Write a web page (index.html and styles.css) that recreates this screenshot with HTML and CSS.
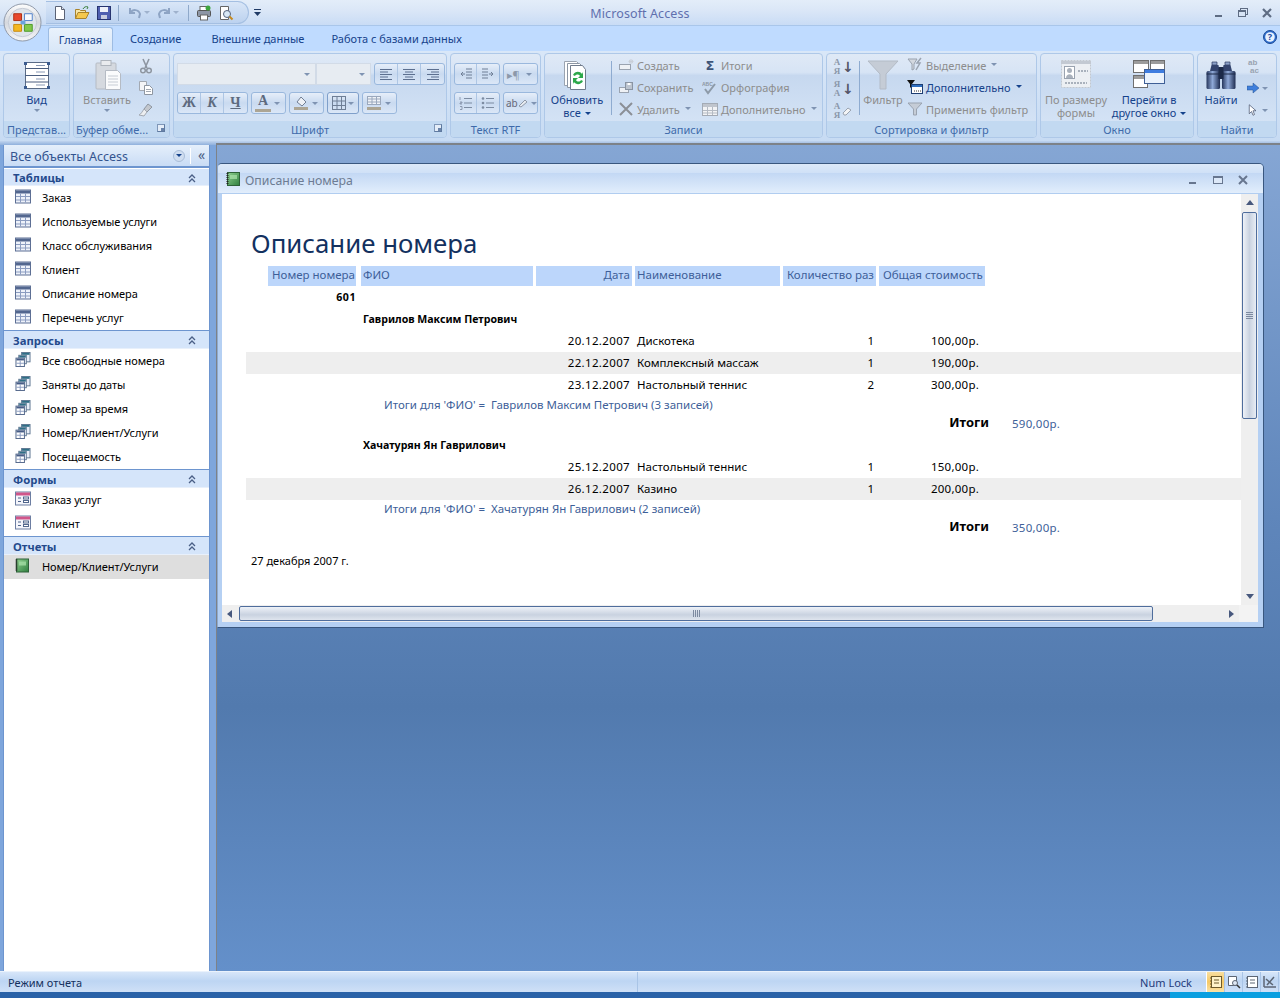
FILE: index.html
```html
<!DOCTYPE html>
<html lang="ru">
<head>
<meta charset="utf-8">
<title>Microsoft Access</title>
<link rel="stylesheet" href="styles.css">
</head>
<body>
<svg class="defs" width="0" height="0">
  <defs>
    <linearGradient id="glass" x1="0" y1="0" x2="0" y2="1"><stop offset="0" stop-color="#fdfdfd"/><stop offset=".5" stop-color="#d5d8de"/><stop offset="1" stop-color="#f4f5f7"/></linearGradient>
    <linearGradient id="bino" x1="0" y1="0" x2="1" y2="0"><stop offset="0" stop-color="#26365c"/><stop offset=".45" stop-color="#8fa9d8"/><stop offset="1" stop-color="#1e2c50"/></linearGradient>
    <linearGradient id="book" x1="0" y1="0" x2="1" y2="1"><stop offset="0" stop-color="#8fd08f"/><stop offset="1" stop-color="#2f7f3f"/></linearGradient>
    <symbol id="i-table" viewBox="0 0 16 14"><rect x=".5" y=".5" width="15" height="13" fill="#eef2fa" stroke="#5d6f94"/><rect x="1" y="1" width="14" height="3" fill="#53678f"/><path d="M1 7h14M1 10.500h14M5.500 4v9M10.500 4v9" stroke="#8b9cc0" fill="none"/></symbol>
    <symbol id="i-query" viewBox="0 0 16 16"><rect x="6.500" y=".5" width="9" height="10" fill="#e9eef8" stroke="#5d7590"/><rect x="7" y="1" width="8" height="2" fill="#2f6f86"/><rect x="3.500" y="3.500" width="8" height="9" fill="#f2f5fb" stroke="#5d7590"/><rect x="4" y="4" width="7" height="2" fill="#2f6f86"/><rect x=".5" y="6.500" width="9" height="9" fill="#fff" stroke="#4f6488"/><rect x="1" y="7" width="8" height="2" fill="#465c86"/><path d="M1 12h8M5 9v6" stroke="#8b9cc0"/></symbol>
    <symbol id="i-form" viewBox="0 0 16 14"><rect x=".5" y=".5" width="15" height="13" fill="#f4f5fb" stroke="#6d7ea2"/><rect x="1" y="1" width="14" height="3" fill="#d0568a"/><path d="M3 6.500h3M3 10h3" stroke="#51668c"/><rect x="8.500" y="5.500" width="5" height="2" fill="#fff" stroke="#51668c"/><rect x="8.500" y="9" width="5" height="2" fill="#fff" stroke="#51668c"/></symbol>
    <symbol id="i-report" viewBox="0 0 14 14"><rect x="1.500" y=".5" width="12" height="13" fill="url(#book)" stroke="#2d6138"/><rect x="4" y="3" width="7" height="4" fill="#a8e0a8" opacity=".75"/><path d="M.5 1.500h2M.5 3.500h2M.5 5.500h2M.5 7.500h2M.5 9.500h2M.5 11.500h2" stroke="#222"/></symbol>
    <symbol id="i-chev" viewBox="0 0 10 10"><path d="M2 5l3-3 3 3M2 9l3-3 3 3" fill="none" stroke="#4a5f86" stroke-width="1.300"/></symbol>
  </defs>
</svg>

<svg class="orb" viewBox="0 0 40 40" aria-hidden="true">
  <circle cx="20" cy="20" r="19" fill="url(#glass)" stroke="#8f98a8"/>
  <circle cx="20" cy="20" r="14.500" fill="#dfe4ea" stroke="#c3c9d3"/>
  <path d="M11 11h8v7h-8z" fill="#e8482c" stroke="#b03012"/>
  <path d="M22 11h8v7h-8z" fill="#f7f9fc" stroke="#4f80c8"/>
  <path d="M11 22h8v7h-8z" fill="#f5b820" stroke="#c78b10"/>
  <path d="M22 22h8v7h-8z" fill="#82c84a" stroke="#4c9a2a"/>
  <path d="M18 18h5v4h-5z" fill="#6aa3de"/>
</svg>

<header class="titlebar">
  <div class="qat-zone">
    <div class="qat">
      <svg class="qi" viewBox="0 0 16 16"><path d="M3.500 1.500h6l3 3v10h-9z" fill="#fff" stroke="#5a6275"/><path d="M9.500 1.500v3h3" fill="#dfe6f2" stroke="#5a6275"/></svg>
      <svg class="qi" viewBox="0 0 16 16"><path d="M1.500 13.500v-9h4l1 1h5v2" fill="#f7e6a6" stroke="#a9832c"/><path d="M1.500 13.500l2.500-6h11l-3 6z" fill="#f5c84e" stroke="#a9832c"/><path d="M9 4c1-2 3-3 5-2l-1 2" fill="none" stroke="#3a7f3a"/></svg>
      <svg class="qi" viewBox="0 0 16 16"><rect x="1.500" y="1.500" width="13" height="13" fill="#4f5fb0" stroke="#27346f"/><rect x="4" y="2" width="8" height="5" fill="#eef1fa"/><rect x="5" y="10" width="6" height="4" fill="#c8cde0"/></svg>
      <i class="qsep"></i>
      <svg class="qi dim" viewBox="0 0 16 16"><path d="M3 3v5h5M3.500 8c2-4 8-4 9.500 1l-1 4" fill="none" stroke="#8ea4c4" stroke-width="2"/></svg>
      <b class="qarrow"></b>
      <svg class="qi dim gap" viewBox="0 0 16 16"><path d="M13 3v5H8M12.500 8c-2-4-8-4-9.500 1l1 4" fill="none" stroke="#8ea4c4" stroke-width="2"/></svg>
      <b class="qarrow"></b>
      <i class="qsep s2"></i>
      <svg class="qi" viewBox="0 0 16 16"><rect x="4" y="1.500" width="8" height="5" fill="#fff" stroke="#666"/><rect x="1.500" y="5.500" width="13" height="6" rx="1" fill="#8d96a6" stroke="#555"/><rect x="4.500" y="10" width="7" height="5" fill="#fff" stroke="#666"/><circle cx="12" cy="3" r="2.500" fill="#3ea53e"/></svg>
      <svg class="qi" viewBox="0 0 16 16"><path d="M2.500 1.500h8v13h-8z" fill="#fff" stroke="#666"/><circle cx="9" cy="9" r="3.500" fill="#d8e8f6" stroke="#55647e"/><path d="M11.500 11.500l3 3" stroke="#c48a20" stroke-width="2"/></svg>
    </div>
    <svg class="qmore" viewBox="0 0 7 7"><path d="M0 .5h7" stroke="#1f3a66"/><path d="M0 3h7L3.500 7z" fill="#1f3a66"/></svg>
  </div>
  <div class="apptitle">Microsoft Access</div>
  <div class="winbtns">
    <svg class="wb" viewBox="0 0 12 12"><rect x="2" y="8" width="7" height="2" fill="#5e6c83"/></svg>
    <svg class="wb" viewBox="0 0 12 12"><rect x="3.500" y="1.500" width="7" height="6" fill="none" stroke="#5e6c83"/><rect x="1.500" y="3.500" width="7" height="6" fill="#d7e4f5" stroke="#5e6c83"/><rect x="1" y="3" width="8" height="2" fill="#5e6c83"/></svg>
    <svg class="wb" viewBox="0 0 12 12"><path d="M2 2l8 8M10 2l-8 8" stroke="#5e6c83" stroke-width="2.200"/></svg>
  </div>
</header>

<nav class="tabs">
  <span class="tab on">Главная</span>
  <span class="tab t2">Создание</span>
  <span class="tab t3">Внешние данные</span>
  <span class="tab t4">Работа с базами данных</span>
  <svg class="help" viewBox="0 0 14 14"><circle cx="7" cy="7" r="6.500" fill="#2e6fd0" stroke="#1d4a94"/><circle cx="7" cy="7" r="4.800" fill="#e9f2ff"/><text x="7" y="10" class="helpq">?</text></svg>
</nav>

<section class="ribbon">
  <div class="grp g1">
    <div class="gbody">
      <div class="lg w-vid">
        <svg class="ic32" viewBox="0 0 32 32"><rect x="4.500" y="3.500" width="23" height="26" fill="#fff" stroke="#5a6b86"/><path d="M4 9.500h24M4 16.500h24M4 23h24" stroke="#4a5d7e"/><path d="M15 6.500h9M15 13h9M15 20h9M15 26h9" stroke="#8898b4"/><path d="M3 3h3v3H3zM26 3h3v3h-3zM3 27h3v3H3zM26 27h3v3h-3z" fill="#3a5b8f"/></svg>
        <span>Вид</span><b class="ar"></b>
      </div>
    </div>
    <div class="glabel">Представ...</div>
  </div>

  <div class="grp g2">
    <div class="gbody row-start">
      <div class="lg w-paste off">
        <svg class="ic32" viewBox="0 0 32 32"><rect x="5" y="4" width="20" height="26" rx="1" fill="#d5d9df" stroke="#b5bbc4"/><rect x="10" y="1.500" width="10" height="5" fill="#e9ebee" stroke="#aeb4bc"/><path d="M14.500 11.500h12l3 3v16h-15z" fill="#fafbfc" stroke="#b5bbc4"/><path d="M17 17h10M17 20h10M17 23h10M17 26h10" stroke="#c6ccd4"/></svg>
        <span>Вставить</span><b class="ar"></b>
      </div>
      <div class="col-ic">
        <svg class="ic16" viewBox="0 0 16 16"><path d="M5 1l4 9M11 1l-4 9" stroke="#8e96a1" stroke-width="1.600"/><circle cx="5" cy="12.500" r="2.300" fill="none" stroke="#8e96a1" stroke-width="1.500"/><circle cx="11" cy="12.500" r="2.300" fill="none" stroke="#8e96a1" stroke-width="1.500"/></svg>
        <svg class="ic16" viewBox="0 0 16 16"><path d="M1.500 1.500h7v9h-7z" fill="#f4f5f7" stroke="#a3a9b2"/><path d="M6.500 5.500h5l3 3v6h-8z" fill="#fff" stroke="#8e96a1"/><path d="M8 9.500h5M8 11.500h5" stroke="#a3a9b2"/></svg>
        <svg class="ic16" viewBox="0 0 16 16"><path d="M10 2l4 3-5 5-3-3z" fill="#c3c7cd" stroke="#8e96a1"/><path d="M6 7l3 3-3 4-5-1c2-1 3-3 5-6z" fill="#eceef1" stroke="#a3a9b2"/></svg>
      </div>
    </div>
    <div class="glabel launch">Буфер обме...<i class="launcher"></i></div>
  </div>

  <div class="grp g3">
    <div class="gbody stack">
      <div class="trow">
        <div class="combo c1"><b class="ar"></b></div>
        <div class="combo c2"><b class="ar"></b></div>
        <div class="btns m3">
          <span class="sq"><svg class="ic14" viewBox="0 0 14 14"><path d="M1 2.500h12M1 5h8M1 7.500h12M1 10h8M1 12.500h12" stroke="#5c6f8f"/></svg></span>
          <span class="sq"><svg class="ic14" viewBox="0 0 14 14"><path d="M1 2.500h12M3 5h8M1 7.500h12M3 10h8M1 12.500h12" stroke="#5c6f8f"/></svg></span>
          <span class="sq"><svg class="ic14" viewBox="0 0 14 14"><path d="M1 2.500h12M5 5h8M1 7.500h12M5 10h8M1 12.500h12" stroke="#5c6f8f"/></svg></span>
        </div>
      </div>
      <div class="trow">
        <div class="btns">
          <span class="sq serif">Ж</span><span class="sq serif it">К</span><span class="sq serif ul">Ч</span>
        </div>
        <div class="btns m3 w35"><span class="bar-ic serif lg-a">А</span><b class="ar"></b></div>
        <div class="btns m3 w35"><svg class="ic16" viewBox="0 0 16 16"><path d="M4 7l4-5 5 5-4 4z" fill="#eef1f6" stroke="#727f94"/><rect x="1" y="12" width="14" height="3" fill="#aca594"/></svg><b class="ar"></b></div>
        <div class="btns m3 w32 ring"><svg class="ic16" viewBox="0 0 16 16"><rect x="1.500" y="1.500" width="13" height="13" fill="none" stroke="#6f7f96"/><path d="M1.500 6h13M1.500 10.500h13M6 1.500v13M10.500 1.500v13" stroke="#6f7f96"/></svg><b class="ar"></b></div>
        <div class="btns m3 w35"><svg class="ic16" viewBox="0 0 16 16"><rect x="1.500" y="1.500" width="13" height="8" fill="#f0f3f8" stroke="#9aa8bd"/><path d="M1.500 4h13M1.500 7h13M6 1.500v8M10.500 1.500v8" stroke="#9aa8bd"/><rect x="1" y="12" width="14" height="3" fill="#aca594"/></svg><b class="ar"></b></div>
      </div>
    </div>
    <div class="glabel launch">Шрифт<i class="launcher"></i></div>
  </div>

  <div class="grp g4">
    <div class="gbody stack">
      <div class="trow">
        <div class="btns">
          <span class="sq w22"><svg class="ic14" viewBox="0 0 14 14"><path d="M7 2h6M7 5h6M7 8h6M7 11h6M2 7h4M2 7l2-2M2 7l2 2" stroke="#6f7f96" fill="none"/></svg></span>
          <span class="sq w22"><svg class="ic14" viewBox="0 0 14 14"><path d="M1 2h6M1 5h6M1 8h6M1 11h6M8 7h4M12 7l-2-2M12 7l-2 2" stroke="#6f7f96" fill="none"/></svg></span>
        </div>
        <div class="btns m3 w35"><span class="para">▸¶</span><b class="ar"></b></div>
      </div>
      <div class="trow">
        <div class="btns">
          <span class="sq w22"><svg class="ic14" viewBox="0 0 14 14"><path d="M5 2.500h8M5 7h8M5 11.500h8" stroke="#7d8ca2"/><path d="M1 1v3M1 6h2v1H1v1h2M1 10.500h2v3H1" stroke="#7d8ca2" fill="none" stroke-width=".8"/></svg></span>
          <span class="sq w22"><svg class="ic14" viewBox="0 0 14 14"><path d="M5 2.500h8M5 7h8M5 11.500h8" stroke="#7d8ca2"/><circle cx="2" cy="2.500" r="1.300" fill="#7d8ca2"/><circle cx="2" cy="7" r="1.300" fill="#7d8ca2"/><circle cx="2" cy="11.500" r="1.300" fill="#7d8ca2"/></svg></span>
        </div>
        <div class="btns m3 w35"><span class="abv">ab</span><svg class="ic10" viewBox="0 0 10 10"><path d="M1 8l6-6 2 2-6 5z" fill="#e7ebf1" stroke="#8f99a8"/></svg><b class="ar"></b></div>
      </div>
    </div>
    <div class="glabel">Текст RTF</div>
  </div>

  <div class="grp g5">
    <div class="gbody row-start">
      <div class="lg w-ref on">
        <svg class="ic32" viewBox="0 0 32 32"><path d="M3.500 2.500h12l3 3v21h-15z" fill="#fff" stroke="#9aa3b0"/><path d="M6.500 4.500h12l3 3v21h-15z" fill="#fff" stroke="#8c96a4"/><path d="M9.500 6.500h12l3 4v20h-15z" fill="#fff" stroke="#6f7b8c"/><path d="M12 16c2-4 7-4 9-1l1-2v6h-5l2-2c-1-2-4-2-5 0zM22 22c-2 4-7 4-9 1l-1 2v-6h5l-2 2c1 2 4 2 5 0z" fill="#2da84a"/></svg>
        <span>Обновить</span>
        <span>все<b class="ar inl"></b></span>
      </div>
      <i class="vsep"></i>
      <div class="col-items c-rec1">
        <div class="it off"><svg class="ic16" viewBox="0 0 16 16"><rect x="1.500" y="7.500" width="11" height="5" fill="#eef1f5" stroke="#9aa3b0"/><path d="M13 2v5M10.500 4.500h5M11 3l4 3M15 3l-4 3" stroke="#c9cfd8"/></svg>Создать</div>
        <div class="it off"><svg class="ic16" viewBox="0 0 16 16"><rect x="1.500" y="8.500" width="9" height="5" fill="#eef1f5" stroke="#9aa3b0"/><rect x="7.500" y="3.500" width="7" height="7" fill="#bcc4cf" stroke="#8a94a2"/><rect x="9.500" y="4" width="3" height="2" fill="#fff"/></svg>Сохранить</div>
        <div class="it off"><svg class="ic16" viewBox="0 0 16 16"><path d="M2 2l12 12M14 2L2 14" stroke="#8b8f96" stroke-width="2"/></svg>Удалить<b class="ar inl"></b></div>
      </div>
      <div class="col-items c-rec2">
        <div class="it off"><span class="sig">Σ</span>Итоги</div>
        <div class="it off"><svg class="ic16" viewBox="0 0 16 16"><text x="0" y="7" class="abc">ABC</text><path d="M3 10l3 4 7-9" fill="none" stroke="#8d9aa8" stroke-width="2"/></svg>Орфография</div>
        <div class="it off"><svg class="ic16" viewBox="0 0 16 16"><rect x=".5" y="2.500" width="15" height="12" fill="#f2f3f5" stroke="#a4abb5"/><rect x="1" y="3" width="14" height="3" fill="#c0c5cd"/><path d="M1 9.500h14M1 12h14M5.500 6v8M10.500 6v8" stroke="#b4bac3"/></svg>Дополнительно<b class="ar inl"></b></div>
      </div>
    </div>
    <div class="glabel">Записи</div>
  </div>

  <div class="grp g6">
    <div class="gbody row-start">
      <div class="col-sort">
        <span class="sort"><span class="az">А<br>Я</span><em>↓</em></span>
        <span class="sort"><span class="az">Я<br>А</span><em>↓</em></span>
        <span class="sort"><span class="az">А<br>Я</span><svg class="ic10" viewBox="0 0 10 10"><path d="M1 7l5-5 3 2-5 5H2z" fill="#f3f4f6" stroke="#9aa3b0"/></svg></span>
      </div>
      <i class="vsep s2"></i>
      <div class="lg w-filter off">
        <svg class="ic32" viewBox="0 0 32 32"><path d="M1 2h30L19 15v15h-6V15z" fill="#c5ccd6" stroke="#b3bbc6"/></svg>
        <span>Фильтр</span>
      </div>
      <div class="col-items c-flt">
        <div class="it off"><svg class="ic16" viewBox="0 0 16 16"><path d="M1 2h9L7 7v5L5 13V7z" fill="#d3d8df" stroke="#99a2af"/><path d="M14 1l-4 5h3l-4 7" fill="none" stroke="#9aa3b0" stroke-width="1.500"/></svg>Выделение<b class="ar inl"></b></div>
        <div class="it act"><svg class="ic16" viewBox="0 0 16 16"><path d="M0 1h8L5 5v5L3 8V5z" fill="#111"/><rect x="4.500" y="5.500" width="11" height="9" fill="#fff" stroke="#1d3e72"/><rect x="5" y="6" width="10" height="2" fill="#2f6fc0"/><path d="M7 12h7" stroke="#333" stroke-dasharray="1 1"/></svg>Дополнительно<b class="ar inl dk"></b></div>
        <div class="it off"><svg class="ic16" viewBox="0 0 16 16"><path d="M1 2h14L9.500 8v6h-3V8z" fill="#c5ccd6" stroke="#9aa3b0"/></svg>Применить фильтр</div>
      </div>
    </div>
    <div class="glabel">Сортировка и фильтр</div>
  </div>

  <div class="grp g7">
    <div class="gbody row-start">
      <div class="lg w-size off">
        <svg class="ic32" viewBox="0 0 32 32"><rect x="1.500" y="1.500" width="29" height="27" fill="#eceff3" stroke="#c2c8d0" stroke-dasharray="2 1"/><rect x="1" y="2" width="30" height="3" fill="#c3c9d2"/><rect x="4.500" y="7.500" width="10" height="12" fill="#fff" stroke="#9aa3b0"/><circle cx="9.500" cy="11.500" r="2.500" fill="#a9b1bc"/><path d="M6 19c0-5 7-5 7 0z" fill="#a9b1bc"/><path d="M18 12h10M5 24h22" stroke="#a9b1bc" stroke-dasharray="2 1" stroke-width="2"/></svg>
        <span>По размеру</span><span>формы</span>
      </div>
      <div class="lg w-go on">
        <svg class="ic32" viewBox="0 0 32 32"><rect x=".5" y="1.500" width="15" height="12" fill="#fff" stroke="#6f6f6f"/><rect x="1" y="2" width="14" height="3" fill="#9c9c9c"/><rect x="17.500" y="1.500" width="14" height="12" fill="#fff" stroke="#6f6f6f"/><rect x="18" y="2" width="13" height="3" fill="#9c9c9c"/><rect x=".5" y="16.500" width="14" height="12" fill="#fff" stroke="#6f6f6f"/><rect x="1" y="17" width="13" height="3" fill="#9c9c9c"/><rect x="11.500" y="10.500" width="20" height="14" fill="#eaf2fc" stroke="#3f5f96"/><rect x="12" y="11" width="19" height="3" fill="#3f7de0"/></svg>
        <span>Перейти в</span>
        <span>другое окно<b class="ar inl"></b></span>
      </div>
    </div>
    <div class="glabel">Окно</div>
  </div>

  <div class="grp g8">
    <div class="gbody row-start">
      <div class="lg w-find on">
        <svg class="ic32" viewBox="0 0 32 32"><path d="M7 3h5v3H7zM20 3h5v3h-5z" fill="#8ba0c8" stroke="#2c3b5f" stroke-width=".7"/><path d="M5 12l1.500-6h7l1 6zM17.500 12l1-6h7l1.500 6z" fill="#33446e"/><rect x="1.500" y="12" width="13.500" height="18" rx="1.500" fill="url(#bino)"/><rect x="17" y="12" width="13.500" height="18" rx="1.500" fill="url(#bino)"/><rect x="13.500" y="8" width="5" height="12" fill="#1c2a49"/><path d="M1.500 15h13.500M17 15h13.500" stroke="#1c2a49"/></svg>
        <span>Найти</span>
      </div>
      <div class="col-ic c-find">
        <svg class="ic16" viewBox="0 0 16 16"><text x="1" y="7" class="abc2">ab</text><text x="3" y="15" class="abc2">ac</text></svg>
        <span class="wa"><svg class="ic12" viewBox="0 0 12 10"><path d="M0 3h6V0l6 5-6 5V7H0z" fill="#3f7fdc" stroke="#27508f" stroke-width=".5"/></svg><b class="ar"></b></span>
        <span class="wa"><svg class="ic12" viewBox="0 0 12 16"><path d="M1 1v12l3-3 2 5 2-1-2-5h4z" fill="#fff" stroke="#4b5670"/></svg><b class="ar"></b></span>
      </div>
    </div>
    <div class="glabel">Найти</div>
  </div>
</section>

<div class="edge"></div>

<main class="main">
  <aside class="pane">
    <div class="panehead">
      <span>Все объекты Access</span>
      <span class="round"><b class="ar dk"></b></span>
      <i class="psep"></i>
      <span class="dbl">«</span>
    </div>

    <h2 class="sect first">Таблицы<svg class="chev"><use href="#i-chev"/></svg></h2>
    <ul class="items">
      <li><svg class="oi"><use href="#i-table"/></svg>Заказ</li>
      <li><svg class="oi"><use href="#i-table"/></svg>Используемые услуги</li>
      <li><svg class="oi"><use href="#i-table"/></svg>Класс обслуживания</li>
      <li><svg class="oi"><use href="#i-table"/></svg>Клиент</li>
      <li><svg class="oi"><use href="#i-table"/></svg>Описание номера</li>
      <li><svg class="oi"><use href="#i-table"/></svg>Перечень услуг</li>
    </ul>

    <h2 class="sect">Запросы<svg class="chev"><use href="#i-chev"/></svg></h2>
    <ul class="items">
      <li><svg class="oi"><use href="#i-query"/></svg>Все свободные номера</li>
      <li><svg class="oi"><use href="#i-query"/></svg>Заняты до даты</li>
      <li><svg class="oi"><use href="#i-query"/></svg>Номер за время</li>
      <li><svg class="oi"><use href="#i-query"/></svg>Номер/Клиент/Услуги</li>
      <li><svg class="oi"><use href="#i-query"/></svg>Посещаемость</li>
    </ul>

    <h2 class="sect">Формы<svg class="chev"><use href="#i-chev"/></svg></h2>
    <ul class="items">
      <li><svg class="oi"><use href="#i-form"/></svg>Заказ услуг</li>
      <li><svg class="oi"><use href="#i-form"/></svg>Клиент</li>
    </ul>

    <h2 class="sect">Отчеты<svg class="chev"><use href="#i-chev"/></svg></h2>
    <ul class="items">
      <li class="sel"><svg class="oi"><use href="#i-report"/></svg>Номер/Клиент/Услуги</li>
    </ul>
  </aside>

  <div class="desk">
    <article class="win">
      <div class="wintitle">
        <svg class="wicon"><use href="#i-report"/></svg>
        <span class="wname">Описание номера</span>
        <svg class="wb2" viewBox="0 0 12 12"><rect x="2" y="8" width="7" height="2" fill="#67768f"/></svg>
        <svg class="wb2" viewBox="0 0 12 12"><rect x="1.500" y="2.500" width="9" height="7" fill="#dce8f8" stroke="#67768f"/><rect x="1" y="2" width="10" height="2" fill="#67768f"/></svg>
        <svg class="wb2" viewBox="0 0 12 12"><path d="M2 2l8 8M10 2l-8 8" stroke="#67768f" stroke-width="2"/></svg>
      </div>
      <div class="winbody">
        <div class="upper">
          <div class="report">
            <h1 class="rtitle">Описание номера</h1>
            <div class="grid head">
              <span></span><span class="hc r">Номер номера</span><span class="hc">ФИО</span><span class="hc r">Дата</span><span class="hc">Наименование</span><span class="hc r">Количество раз</span><span class="hc">Общая стоимость</span>
            </div>
            <div class="grid line"><span></span><b class="r pr num">601</b></div>
            <div class="grid line"><span></span><span></span><b class="pl">Гаврилов Максим Петрович</b></div>
            <div class="grid line"><span></span><span></span><span></span><span class="r pr dt">20.12.2007</span><span class="pl">Дискотека</span><span class="r pr">1</span><span class="r cost">100,00р.</span></div>
            <div class="grid line alt"><span></span><span></span><span></span><span class="r pr dt">22.12.2007</span><span class="pl">Комплексный массаж</span><span class="r pr">1</span><span class="r cost">190,00р.</span></div>
            <div class="grid line"><span></span><span></span><span></span><span class="r pr dt">23.12.2007</span><span class="pl">Настольный теннис</span><span class="r pr">2</span><span class="r cost">300,00р.</span></div>
            <div class="sum">Итоги для 'ФИО' =  Гаврилов Максим Петрович (3 записей)</div>
            <div class="tot"><b>Итоги</b><span>590,00р.</span></div>
            <div class="grid line"><span></span><span></span><b class="pl">Хачатурян Ян Гаврилович</b></div>
            <div class="grid line"><span></span><span></span><span></span><span class="r pr dt">25.12.2007</span><span class="pl">Настольный теннис</span><span class="r pr">1</span><span class="r cost">150,00р.</span></div>
            <div class="grid line alt"><span></span><span></span><span></span><span class="r pr dt">26.12.2007</span><span class="pl">Казино</span><span class="r pr">1</span><span class="r cost">200,00р.</span></div>
            <div class="sum">Итоги для 'ФИО' =  Хачатурян Ян Гаврилович (2 записей)</div>
            <div class="tot"><b>Итоги</b><span>350,00р.</span></div>
            <div class="date">27 декабря 2007 г.</div>
          </div>
          <div class="vscroll">
            <span class="tri up"></span>
            <div class="vthumb"><i class="grip"></i></div>
            <span class="tri dn"></span>
          </div>
        </div>
        <div class="hscroll">
          <span class="tri lf"></span>
          <div class="hthumb"><i class="hgrip"></i></div>
          <span class="tri rt"></span>
          <span class="corner"></span>
        </div>
      </div>
    </article>
  </div>
</main>

<footer class="status">
  <span class="st1">Режим отчета</span>
  <span class="st2">Num Lock</span>
  <div class="views">
    <span class="vb act"><svg class="ic14" viewBox="0 0 14 14"><rect x="2.500" y="1.500" width="10" height="11" fill="#fff3c9" stroke="#6d5a2a"/><path d="M1 3h2M1 6h2M1 9h2M1 12h2M5 5h5M5 8h5" stroke="#6d5a2a"/></svg></span>
    <span class="vb"><svg class="ic14" viewBox="0 0 14 14"><path d="M1.500 1.500h8v9h-8z" fill="#fff" stroke="#5d6675"/><circle cx="8" cy="8" r="2.500" fill="#dfe8f4" stroke="#5d6675"/><path d="M10 10l3 3" stroke="#333" stroke-width="1.500"/></svg></span>
    <span class="vb"><svg class="ic14" viewBox="0 0 14 14"><rect x="2.500" y="1.500" width="10" height="11" fill="#fff" stroke="#5d6675"/><path d="M1 3h2M1 6h2M1 9h2M1 12h2M5 5h5M5 8h5" stroke="#5d6675"/></svg></span>
    <span class="vb"><svg class="ic14" viewBox="0 0 14 14"><path d="M1 12h12M1 1v11" stroke="#5d6675" stroke-width="1.500"/><path d="M3 4l7 6M11 2l-7 8" stroke="#5d6675" stroke-width="1.500"/></svg></span>
  </div>
</footer>
<div class="taskbar"><span class="tb1"></span><span class="tb2"></span></div>
</body>
</html>
```

FILE: styles.css
```css
* { box-sizing: border-box; }
html, body { margin: 0; padding: 0; }
body {
  width: 1280px; height: 998px; overflow: hidden; position: relative;
  display: flex; flex-direction: column;
  font: 11px/13px "Noto Sans", "DejaVu Sans", sans-serif;
  color: #000; background: #bfdbff;
}
.defs { position: absolute; }
svg { display: block; flex: none; }
b, em { font-style: normal; }

.orb { position: absolute; left: 3px; top: 3px; width: 39px; height: 39px; z-index: 3; }

.titlebar {
  height: 26px; flex: none; display: grid; grid-template-columns: 1fr auto 1fr; align-items: center;
  background: linear-gradient(#e3edf9 0, #dbe7f7 40%, #c9dcf5 100%);
  border-bottom: 1px solid #a9c6ea;
}
.qat-zone { display: flex; align-items: center; height: 25px; }
.qat {
  display: flex; align-items: center; margin-left: 46px; width: 203px; height: 23px; padding-left: 6px;
  background: linear-gradient(#d9e6f7, #bcd2ef); border-radius: 0 12px 12px 0 / 0 12px 12px 0;
  border: 1px solid #a4bfe2; border-left: 0;
}
.qi { width: 16px; height: 16px; margin-right: 6px; }
.qi.dim { margin-right: 1px; margin-left: 2px; }
.qi.gap { margin-left: 6px; }
.qarrow { width: 0; height: 0; border: 3px solid transparent; border-top: 3px solid #9fb2cd; margin-top: 3px; }
.qsep { width: 1px; height: 16px; background: #8fa9ca; margin: 0 6px 0 0; }
.qsep.s2 { margin: 0 7px 0 9px; }
.qmore { width: 7px; height: 7px; margin-left: 5px; }
.apptitle { font-size: 12.5px; color: #5f6fae; letter-spacing: .1px; padding-top: 2px; }
.winbtns { display: flex; justify-content: flex-end; gap: 12px; padding-right: 7px; }
.wb { width: 12px; height: 12px; }

.tabs {
  height: 25px; flex: none; display: flex; align-items: flex-end; padding-left: 48px; position: relative;
  background: #bfdbff; color: #15428b;
}
.tab { font-size: 11px; height: 24px; line-height: 24px; }
.tab.on {
  width: 65px; text-align: center; height: 24px; color: #15428b;
  background: linear-gradient(#e9f2fc, #d9e7f8); border: 1px solid #9dbce3; border-bottom: 0; border-radius: 3px 3px 0 0;
}
.t2 { margin-left: 17px; }
.t3 { margin-left: 30px; }
.t4 { margin-left: 27px; }
.help { position: absolute; right: 3px; top: 4px; width: 14px; height: 14px; }
.helpq { font: bold 9px "Noto Sans", sans-serif; fill: #1c4aa0; text-anchor: middle; }

.ribbon {
  height: 90px; flex: none; display: flex; gap: 3px; padding: 2px 3px 3px;
  background: linear-gradient(#d9e7f8, #c7dbf3);
}
.grp {
  display: flex; flex-direction: column; flex: none;
  border: 1px solid #aec8e8; border-radius: 4px; overflow: hidden;
  background: linear-gradient(#dfe9f6 0, #d7e4f5 22%, #c6d8ef 26%, #d8e6f7 100%);
}
.g1 { width: 67px; } .g2 { width: 97px; } .g3 { width: 274px; } .g4 { width: 91px; margin-left: 0; }
.g5 { width: 279px; } .g6 { width: 211px; } .g7 { width: 154px; } .g8 { width: 80px; }
.gbody { flex: 1; min-height: 0; }
.glabel {
  height: 16px; flex: none; text-align: center; font-size: 11px; line-height: 17px; color: #3e6aaa;
  background: #c2d9f1; position: relative; white-space: nowrap;
}
.launch { text-align: center; }
.g2 .glabel { text-align: left; padding-left: 2px; }
.launcher { position: absolute; right: 4px; top: 3px; width: 8px; height: 8px; border: 1px solid #7f97b8; border-right-color: #5f7aa0; border-bottom-color: #5f7aa0; background: #e4edf8; }
.launcher::after { content: ""; position: absolute; right: 0; bottom: 0; width: 3px; height: 3px; background: #6a84aa; }

.row-start { display: flex; align-items: flex-start; }
.lg { display: flex; flex-direction: column; align-items: center; padding-top: 5px; color: #15428b; flex: none; white-space: nowrap; }
.lg span { line-height: 13px; }
.lg .ic32 { margin-bottom: 2px; }
.lg.off { color: #8d8d8d; }
.ic32 { width: 32px; height: 32px; }
.ic16 { width: 16px; height: 16px; }
.ic14 { width: 14px; height: 14px; }
.ic12 { width: 12px; height: 12px; }
.ic10 { width: 10px; height: 10px; }
.ar { display: block; width: 0; height: 0; border: 3px solid transparent; border-top: 3px solid #7f93b2; margin-top: 3px; flex: none; }
.ar.inl { display: inline-block; margin: 0 0 0 4px; vertical-align: -1px; }
.ar.dk { border-top-color: #15428b; }
.lg span .ar { border-top-color: #15428b; }
.w-vid { width: 65px; }
.w-paste { width: 62px; margin-left: 2px; }
.w-ref { width: 64px; }
.w-filter { width: 44px; margin-left: 1px; }
.w-size { width: 68px; margin-left: 1px; }
.w-go { width: 78px; }
.w-find { width: 46px; }
.col-ic { display: flex; flex-direction: column; gap: 6px; padding-top: 4px; margin-left: 0; }
.c-find { margin-left: 3px; gap: 6px; }
.wa { display: flex; align-items: center; gap: 3px; height: 16px; }
.wa .ar { margin-top: 3px; }

.stack { display: flex; flex-direction: column; gap: 7px; padding: 9px 0 0 3px; }
.trow { display: flex; height: 22px; }
.combo { height: 22px; background: #e7ecf2; border: 1px solid #d2dbe7; display: flex; align-items: center; justify-content: flex-end; padding-right: 5px; }
.c1 { width: 139px; } .c2 { width: 55px; }
.btns {
  display: flex; align-items: center; height: 22px; border: 1px solid #9ab8dd; border-radius: 3px;
  background: linear-gradient(#e6eef9, #c9daf0 50%, #dbe7f7);
}
.m3 { margin-left: 3px; }
.w35 { width: 35px; padding-left: 3px; gap: 3px; }
.w32 { width: 32px; padding-left: 3px; gap: 1px; }
.ring { border-color: #7f9fca; }
.sq { width: 23px; height: 20px; display: flex; align-items: center; justify-content: center; border-right: 1px solid #aec6e4; color: #5d6a7e; }
.sq:last-child { border-right: 0; }
.w22 { width: 22px; }
.serif { font: bold 14px/20px "Liberation Serif", serif; color: #5d6a7e; }
.sq.it { font-style: italic; }
.ul { text-decoration: underline; }
.bar-ic { width: 16px; height: 18px; text-align: center; line-height: 14px; border-bottom: 3px solid #aca594; }
.para { font-size: 11px; color: #8c98aa; width: 16px; }
.abv { font-size: 10px; color: #667; margin-left: -1px; }
.btns .ic10 { margin-left: -3px; }

.vsep { width: 1px; height: 54px; background: #8eabd0; margin: 7px 6px 0 2px; flex: none; }
.vsep.s2 { margin: 7px 0 0 5px; }
.col-items { display: flex; flex-direction: column; padding-top: 0; flex: none; white-space: nowrap; }
.col-items .it { height: 22px; display: flex; align-items: center; gap: 3px; font-size: 11px; }
.col-items .off { color: #8d8d8d; }
.col-items .act { color: #15428b; }
.col-items .ar.inl { margin-left: 2px; margin-top: 2px; }
.c-rec1 { width: 82px; }
.c-rec2 { margin-left: 2px; }
.c-flt { margin-left: 2px; }
.sig { width: 16px; text-align: center; font: bold 13px "DejaVu Sans", sans-serif; color: #3f5578; }
.abc { font: bold 5px "Liberation Sans", sans-serif; fill: #8d96a3; }
.abc2 { font: bold 8px "Liberation Sans", sans-serif; fill: #99a3b1; }
.col-sort { display: flex; flex-direction: column; gap: 1px; padding: 2px 0 0 5px; width: 27px; }
.sort { display: flex; height: 21px; align-items: center; color: #75859e; }
.az { font: bold 9px/9px "Liberation Serif", serif; color: #8a97aa; width: 10px; text-align: center; }
.sort em { font-size: 14px; color: #556; font-weight: bold; }

.edge { height: 4px; flex: none; background: linear-gradient(#c0d4ee, #8fb0dc); }

.main { flex: 1; min-height: 0; display: flex; background: #7ea6dc; }
.pane { width: 207px; flex: none; margin: 0 6px 0 3px; background: #fff; border: 1px solid #6d95cf; border-top: 0; border-bottom: 0; display: flex; flex-direction: column; }
.panehead {
  height: 23px; flex: none; display: flex; align-items: center; padding: 1px 0 0 6px; font-size: 12.5px; color: #33548f;
  background: linear-gradient(#e5effb, #c9dcf5); border-bottom: 2px solid #6d95cf;
}
.panehead span:first-child { flex: 1; }
.round { width: 12px; height: 12px; border-radius: 50%; background: #cfddf0; border: 1px solid #a9bdd8; display: flex; justify-content: center; align-items: center; margin-right: 5px; }
.round .ar { margin-top: 2px; }
.psep { width: 1px; height: 16px; background: #fff; margin-right: 3px; }
.dbl { font-size: 14px; color: #4a5f86; width: 15px; text-align: center; line-height: 16px; margin-top: -2px; }
.sect {
  margin: 0; height: 19px; flex: none; display: flex; align-items: center; justify-content: space-between; padding: 1px 12px 0 9px;
  font-size: 11.3px; font-weight: bold; color: #244a8c; background: #d5e5fa; border-top: 1px solid #6d95cf;
  border-bottom: 1px solid #e8f0fb;
}
.sect.first { height: 18px; border-top: 1px solid #fff; }
.chev { width: 10px; height: 10px; }
.items { list-style: none; margin: 0; padding: 0; }
.items li { height: 24px; display: flex; align-items: center; padding: 0 0 2px 11px; font-size: 11px; letter-spacing: -.05px; }
.items .sel { background: #dedede; }
.oi { width: 16px; height: 15px; margin-right: 11px; margin-top: -2px; }
.sel .oi { width: 14px; margin-right: 13px; }

.desk {
  flex: 1; position: relative; margin-top: -2px;
  background: linear-gradient(#85a6d4 0, #5f86bb 45%, #527aae 68%, #6490ca 100%);
  border-left: 1px solid #7d8288; border-top: 2px solid #7d8288;
}
.win {
  position: absolute; left: 0; top: 18px; width: 1047px; height: 465px;
  display: flex; flex-direction: column; background: #b5d0f3;
  border: 1px solid #39577f; border-radius: 5px 5px 0 0; border-top-color: #39577f;
  border-left-color: #8ea9cd;
}
.wintitle {
  height: 30px; flex: none; display: flex; align-items: center; padding: 3px 14px 0 8px;
  background: linear-gradient(#dce9f9 0, #d0e1f7 30%, #c3d8f4 32%, #e2eefc 100%);
  border-bottom: 1px solid #b1cdf0; border-radius: 4px 4px 0 0;
}
.wicon { width: 14px; height: 14px; margin-right: 6px; margin-top: -2px; }
.wname { flex: 1; font-size: 12.3px; color: #6d7c93; margin-left: -1px; }
.wb2 { width: 12px; height: 12px; margin-left: 13px; }
.winbody { flex: 1; min-height: 0; margin: 0 5px 5px 4px; background: #fff; display: flex; flex-direction: column; }
.upper { flex: 1; min-height: 0; display: flex; }
.report { flex: 1; padding-left: 24px; min-width: 0; overflow: hidden; }
.rtitle { margin: 0; height: 72px; padding: 34px 0 0 5px; font-size: 25.8px; line-height: 30px; font-weight: normal; color: #13315f; }
.grid { display: grid; grid-template-columns: 22px 93px 175px 99px 148px 96px 106px 1fr; font-size: 11.5px; }
.head { height: 20px; color: #3e5f99; }
.hc { background: #bcd6fb; line-height: 18px; margin-right: 3px; padding: 0 3px; white-space: nowrap; }
.head .hc:nth-child(2) { margin-right: 5px; padding-right: 1px; }
.head .hc:nth-child(4) { padding-right: 2px; }
.head .hc:nth-child(3) { padding-left: 2px; }
.head .hc:nth-child(5) { padding-left: 2px; }
.head .hc:nth-child(6) { padding-right: 2px; }
.head .hc:last-child { margin-right: 0; padding-left: 4px; }
.line { height: 22px; line-height: 22px; white-space: nowrap; }
.line b { font-size: 10.6px; }
.line b.num { letter-spacing: .5px; }
.alt { background: #eeeeee; }
.r { text-align: right; }
.pr { padding-right: 5px; }
.dt { letter-spacing: .35px; }
.pl { padding-left: 2px; }
.cost { padding-right: 6px; letter-spacing: .25px; }
.sum { height: 18px; line-height: 18px; padding-left: 138px; font-size: 11.5px; color: #3e5f99; white-space: pre; }
.tot { height: 20px; display: flex; align-items: center; padding-bottom: 4px; }
.tot b { width: 743px; text-align: right; font-size: 13px; }
.tot span { margin-left: 23px; font-size: 11.5px; letter-spacing: .25px; color: #3e5f99; margin-top: 3px; }
.date { padding: 16px 0 0 5px; }

.vscroll { width: 17px; flex: none; background: #efefef; display: flex; flex-direction: column; align-items: center; padding-top: 6px; }
.tri { display: block; width: 0; height: 0; border: 4px solid transparent; flex: none; }
.up { border-top: 0; border-bottom: 5px solid #47587d; }
.dn { border-bottom: 0; border-top: 5px solid #47587d; margin-top: 175px; }
.lf { border-left: 0; border-right: 5px solid #47587d; }
.rt { border-right: 0; border-left: 5px solid #47587d; }
.vthumb {
  width: 15px; height: 207px; margin-top: 7px; border: 1px solid #4f6d9c; border-radius: 2px;
  background: linear-gradient(90deg, #eef2f8, #c9d2e0 50%, #e8edf4); display: flex; align-items: center; justify-content: center;
}
.grip { width: 7px; height: 7px; background: repeating-linear-gradient(#7d8aa0 0 1px, transparent 1px 2px); }
.hscroll { height: 17px; flex: none; background: #efefef; display: flex; align-items: center; padding-left: 5px; }
.hthumb {
  width: 914px; height: 15px; margin-left: 7px; border: 1px solid #4f6d9c; border-radius: 2px;
  background: linear-gradient(#eef2f8, #c9d2e0 60%, #dfe5ee); display: flex; align-items: center; justify-content: center;
}
.hgrip { width: 7px; height: 7px; background: repeating-linear-gradient(90deg, #7d8aa0 0 1px, transparent 1px 2px); }
.rt { margin-left: 76px; }
.corner { width: 19px; height: 17px; margin-left: auto; background: #f3f3f3; }

.status {
  height: 21px; flex: none; display: flex; align-items: center; font-size: 11px; color: #15315e;
  background: linear-gradient(#d7e6f9, #bdd5f3 45%, #cfe0f7); border-top: 1px solid #eaf2fc;
}
.st1 { padding-left: 8px; width: 638px; height: 100%; line-height: 21px; border-right: 1px solid #a9c4e6; }
.st2 { margin-left: auto; color: #1f3a7a; padding-right: 14px; }
.views { display: flex; height: 20px; border-left: 1px solid #fff; margin-right: 1px; }
.vb { width: 18px; height: 20px; display: flex; align-items: center; justify-content: center; border-right: 1px solid #a9c4e6; }
.vb.act { background: linear-gradient(#f8dfa0, #f5c865 50%, #fbe3a6); }
.taskbar { height: 6px; flex: none; display: flex; }
.tb1 { width: 1170px; background: #2a62a8; }
.tb2 { flex: 1; background: #0a9fe0; }
```
